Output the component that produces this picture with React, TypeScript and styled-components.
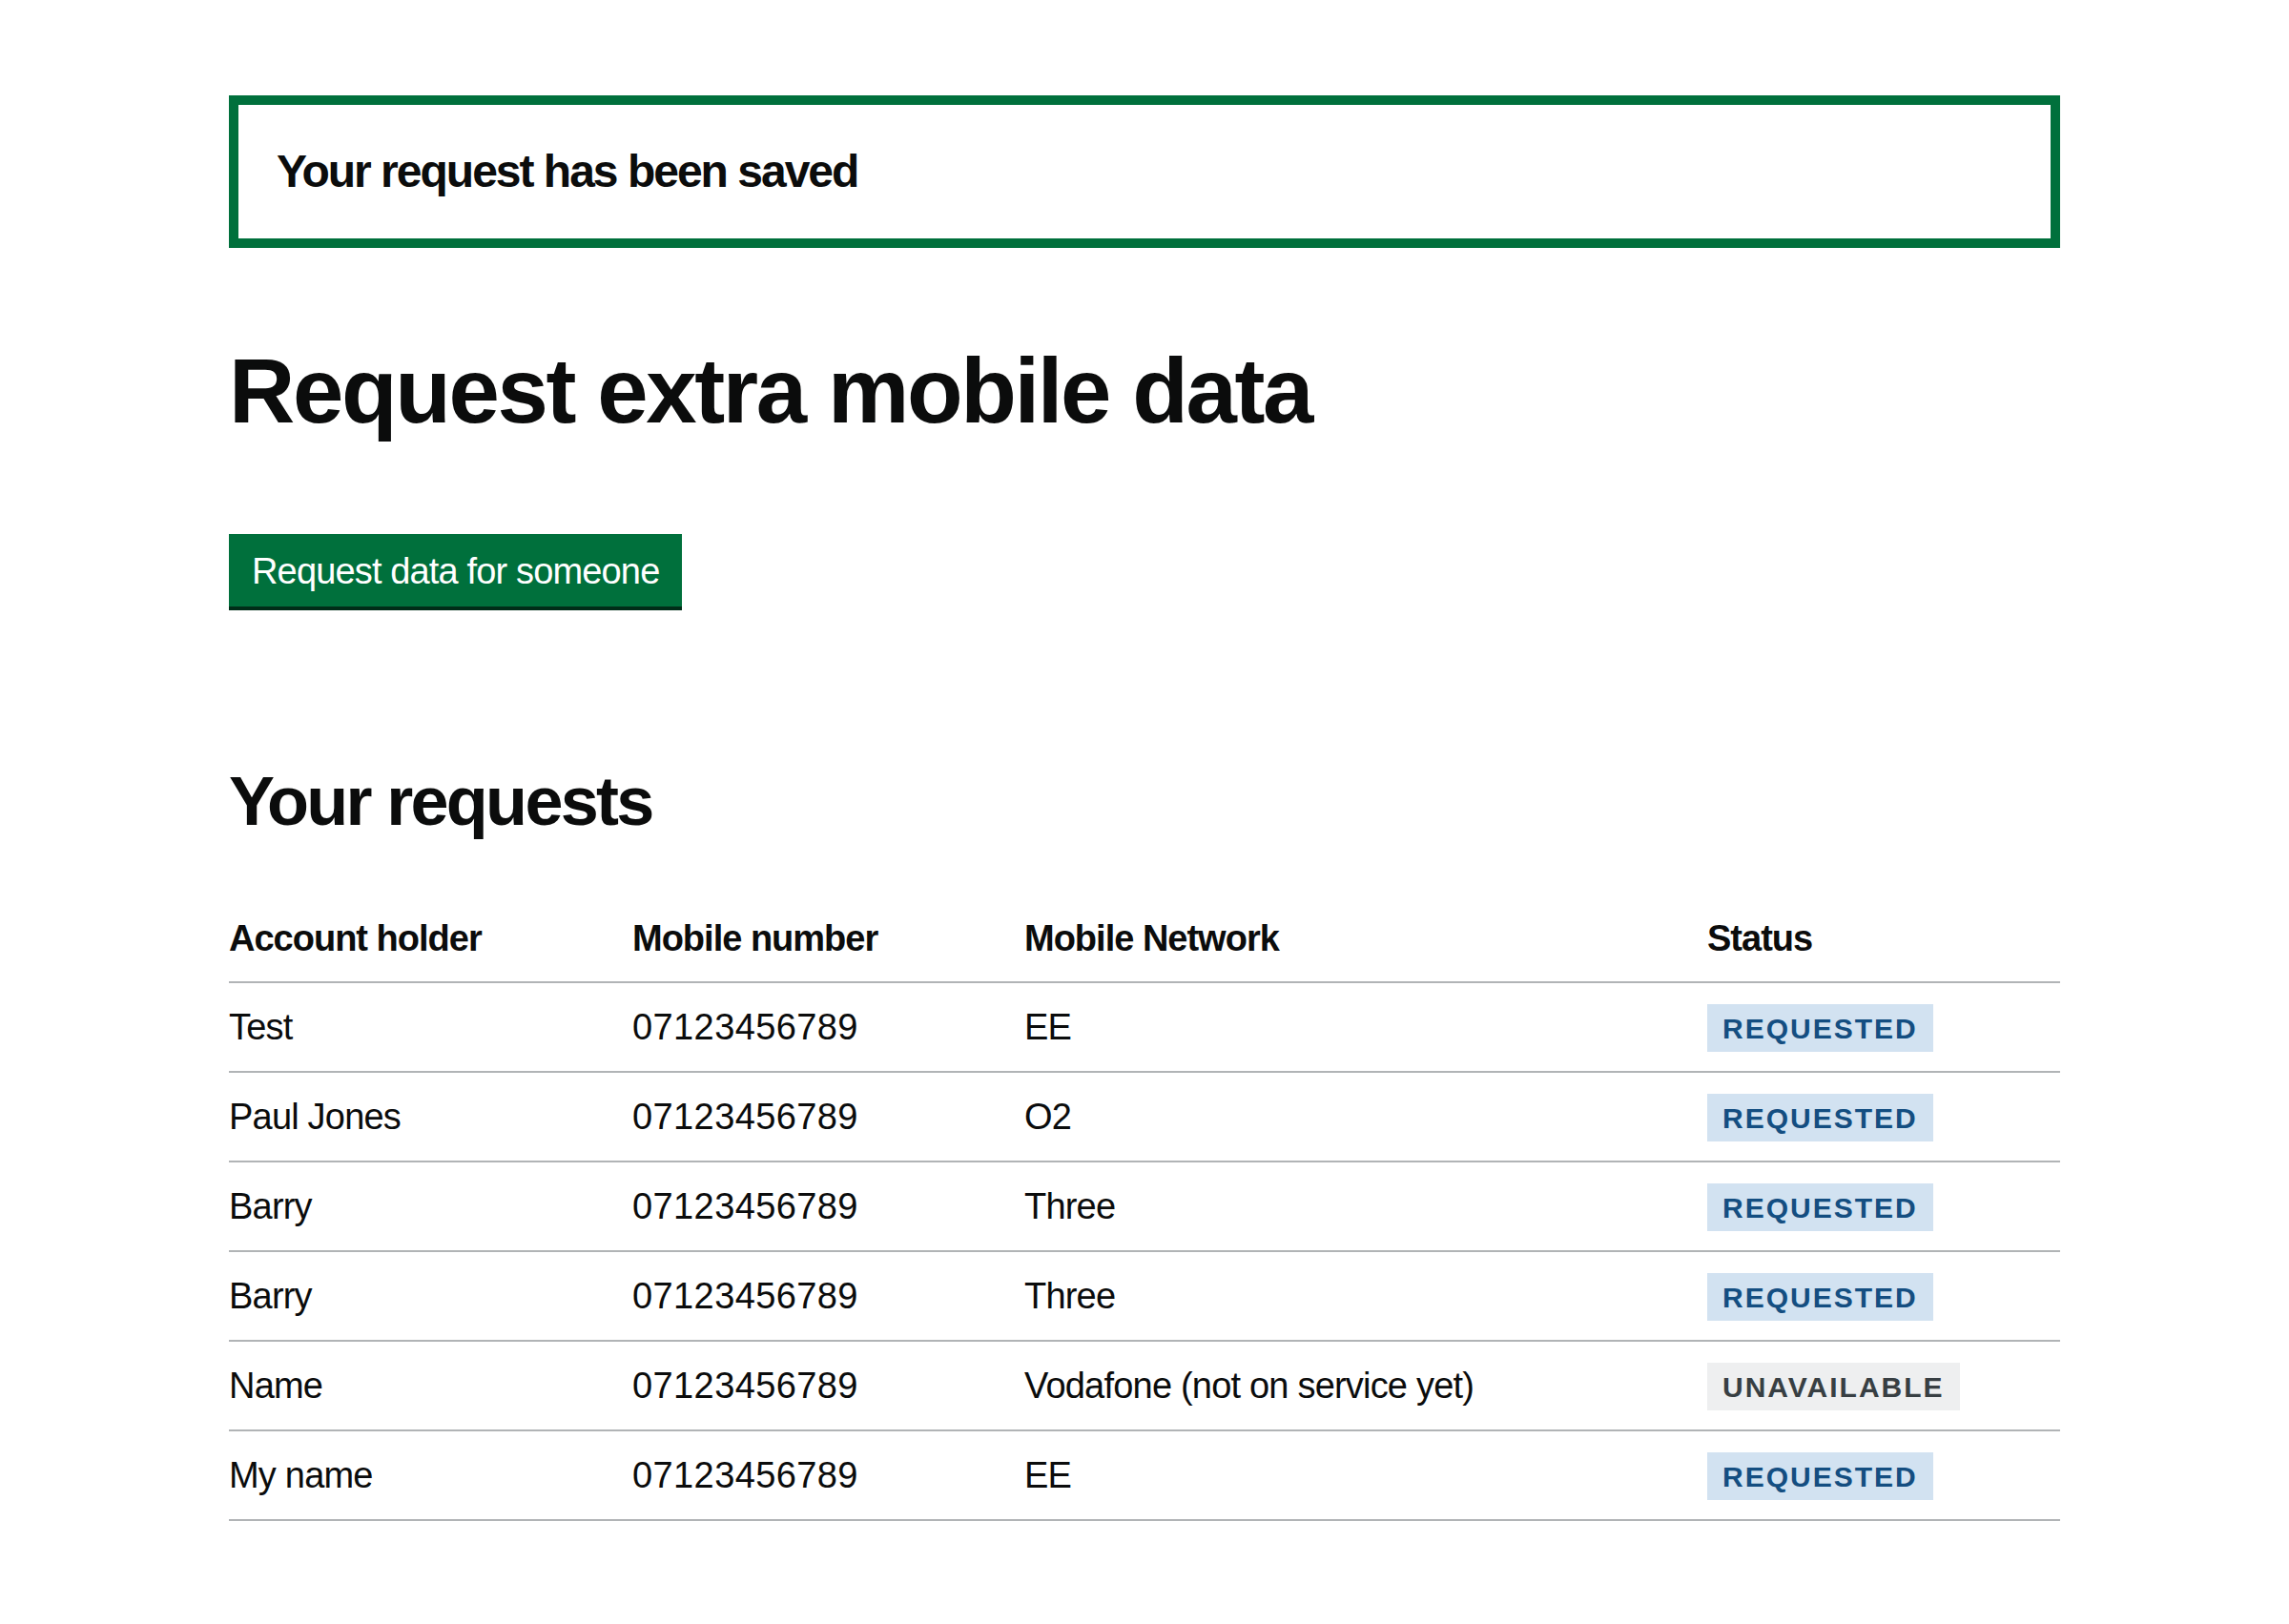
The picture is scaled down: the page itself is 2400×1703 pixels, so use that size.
import React from "react";
import styled, { createGlobalStyle } from "styled-components";

const GlobalStyle = createGlobalStyle`
  html, body {
    margin: 0;
    padding: 0;
    background: #ffffff;
  }
  body {
    font-family: "Liberation Sans", Arial, sans-serif;
    color: #0b0c0c;
  }
`;

const Page = styled.main`
  width: 1920px;
  margin: 0 auto;
  padding: 100px 0 80px;
  box-sizing: border-box;
`;

const Banner = styled.div`
  border: 10px solid #00703c;
  padding: 40px;
`;

const BannerHeading = styled.p`
  margin: 0;
  font-size: 48px;
  line-height: 60px;
  font-weight: 700;
  letter-spacing: -2px;
`;

const Title = styled.h1`
  margin: 100px 0;
  font-size: 96px;
  line-height: 100px;
  font-weight: 700;
  letter-spacing: -2.4px;
`;

const Actions = styled.div`
  display: flex;
  margin-bottom: 164px;
`;

const Button = styled.button`
  font-family: "Liberation Sans", Arial, sans-serif;
  font-size: 38px;
  line-height: 38px;
  font-weight: 400;
  letter-spacing: -0.85px;
  color: #ffffff;
  background: #00703c;
  border: 4px solid transparent;
  border-radius: 0;
  padding: 16px 20px 14px;
  margin: 0;
  box-shadow: 0 4px 0 #002d18;
  cursor: pointer;
`;

const SectionHeading = styled.h2`
  margin: 0 0 59px;
  font-size: 72px;
  line-height: 80px;
  font-weight: 700;
  letter-spacing: -2.7px;
`;

const Table = styled.table`
  width: 100%;
  border-collapse: collapse;
  border-spacing: 0;
  table-layout: fixed;
`;

const HeaderCell = styled.th`
  text-align: left;
  font-size: 38px;
  line-height: 50px;
  font-weight: 700;
  letter-spacing: -1px;
  padding: 20px 40px 20px 0;
  border-bottom: 2px solid #b1b4b6;
  &:last-child {
    padding-right: 0;
  }
`;

const Cell = styled.td<{ $numeric?: boolean }>`
  text-align: left;
  font-size: 38px;
  line-height: 50px;
  font-weight: 400;
  letter-spacing: ${(p) => (p.$numeric ? "0.4px" : "-0.8px")};
  padding: 20px 40px 20px 0;
  border-bottom: 2px solid #b1b4b6;
  white-space: nowrap;
  &:last-child {
    padding-right: 0;
  }
`;

const Tag = styled.span<{ $variant: "blue" | "grey" }>`
  display: inline-block;
  font-size: 30px;
  line-height: 32px;
  font-weight: 700;
  letter-spacing: 2px;
  text-transform: uppercase;
  padding: 10px 16px 8px;
  color: ${(p) => (p.$variant === "blue" ? "#144e81" : "#383f43")};
  background: ${(p) => (p.$variant === "blue" ? "#d2e2f1" : "#eeeff0")};
`;

type Row = {
  name: string;
  number: string;
  network: string;
  status: "Requested" | "Unavailable";
};

const rows: Row[] = [
  { name: "Test", number: "07123456789", network: "EE", status: "Requested" },
  { name: "Paul Jones", number: "07123456789", network: "O2", status: "Requested" },
  { name: "Barry", number: "07123456789", network: "Three", status: "Requested" },
  { name: "Barry", number: "07123456789", network: "Three", status: "Requested" },
  { name: "Name", number: "07123456789", network: "Vodafone (not on service yet)", status: "Unavailable" },
  { name: "My name", number: "07123456789", network: "EE", status: "Requested" },
];

export default function App() {
  return (
    <>
      <GlobalStyle />
      <Page>
        <Banner role="alert">
          <BannerHeading>Your request has been saved</BannerHeading>
        </Banner>
        <Title>Request extra mobile data</Title>
        <Actions>
          <Button type="button">Request data for someone</Button>
        </Actions>
        <SectionHeading>Your requests</SectionHeading>
        <Table>
          <colgroup>
            <col style={{ width: 423 }} />
            <col style={{ width: 411 }} />
            <col style={{ width: 716 }} />
            <col style={{ width: 370 }} />
          </colgroup>
          <thead>
            <tr>
              <HeaderCell>Account holder</HeaderCell>
              <HeaderCell>Mobile number</HeaderCell>
              <HeaderCell>Mobile Network</HeaderCell>
              <HeaderCell>Status</HeaderCell>
            </tr>
          </thead>
          <tbody>
            {rows.map((r, i) => (
              <tr key={i}>
                <Cell>{r.name}</Cell>
                <Cell $numeric>{r.number}</Cell>
                <Cell>{r.network}</Cell>
                <Cell>
                  <Tag $variant={r.status === "Requested" ? "blue" : "grey"}>{r.status}</Tag>
                </Cell>
              </tr>
            ))}
          </tbody>
        </Table>
      </Page>
    </>
  );
}
